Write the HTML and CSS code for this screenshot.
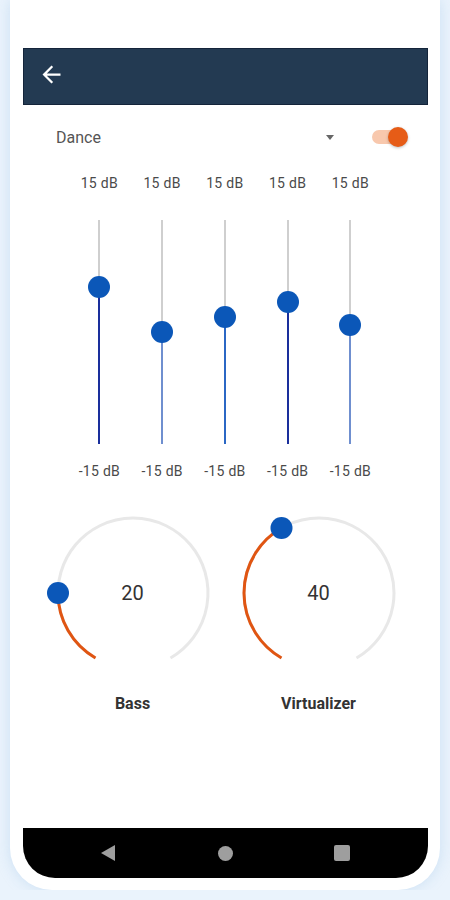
FILE: index.html
```html
<!DOCTYPE html>
<html>
<head>
  <title>Equalizer</title>
  <meta charset="utf-8">
  <meta name="viewport" content="width=device-width, initial-scale=1.0">
  <link rel="stylesheet" href="styles.css">
</head>
<body>
  <div class="phone">
    <div class="screen">
      <div class="appbar">
        <svg class="back" width="27" height="27" viewBox="0 0 24 24"><path d="M20 11H7.83l5.59-5.59L12 4l-8 8 8 8 1.41-1.41L7.83 13H20v-2z" fill="#fff"/></svg>
      </div>
      <div class="content">
        <div class="preset-row">
          <span class="preset">Dance</span>
          <span class="caret"></span>
          <span class="switch"><span class="switch-thumb"></span></span>
        </div>

        <div class="bands">
          <div class="band">
            <span class="db">15 dB</span>
            <div class="track"><div class="rest"></div><div class="fill dark" style="height:157px"><span class="thumb"></span></div></div>
            <span class="db">-15 dB</span>
          </div>
          <div class="band">
            <span class="db">15 dB</span>
            <div class="track"><div class="rest"></div><div class="fill light" style="height:112px"><span class="thumb"></span></div></div>
            <span class="db">-15 dB</span>
          </div>
          <div class="band">
            <span class="db">15 dB</span>
            <div class="track"><div class="rest"></div><div class="fill mid" style="height:127px"><span class="thumb"></span></div></div>
            <span class="db">-15 dB</span>
          </div>
          <div class="band">
            <span class="db">15 dB</span>
            <div class="track"><div class="rest"></div><div class="fill dark" style="height:142px"><span class="thumb"></span></div></div>
            <span class="db">-15 dB</span>
          </div>
          <div class="band">
            <span class="db">15 dB</span>
            <div class="track"><div class="rest"></div><div class="fill light" style="height:119px"><span class="thumb"></span></div></div>
            <span class="db">-15 dB</span>
          </div>
        </div>

        <div class="knobs">
          <div class="knob">
            <div class="dial">
              <svg width="184" height="184" viewBox="-12 -12 184 184">
                <path d="M42.5 144.95 A75 75 0 1 1 117.5 144.95" class="arc-bg"/>
                <path d="M42.5 144.95 A75 75 0 0 1 5 80" class="arc-on"/>
                <circle cx="5" cy="80" r="11" fill="#0b57b8"/>
              </svg>
              <span class="value">20</span>
            </div>
            <span class="knob-label">Bass</span>
          </div>
          <div class="knob">
            <div class="dial">
              <svg width="184" height="184" viewBox="-12 -12 184 184">
                <path d="M42.5 144.95 A75 75 0 1 1 117.5 144.95" class="arc-bg"/>
                <path d="M42.5 144.95 A75 75 0 0 1 42.5 15.05" class="arc-on"/>
                <circle cx="42.5" cy="15.05" r="11" fill="#0b57b8"/>
              </svg>
              <span class="value">40</span>
            </div>
            <span class="knob-label">Virtualizer</span>
          </div>
        </div>
      </div>
      <div class="navbar">
        <svg width="16" height="18" viewBox="0 0 16 18"><path d="M15 1v16L1 9z" fill="#9e9e9e"/></svg>
        <span class="nav-home"></span>
        <span class="nav-recent"></span>
      </div>
    </div>
  </div>
</body>
</html>
```

FILE: styles.css
```css
body { margin: 0; background: #eaf3fc; font-family: Roboto, "Liberation Sans", sans-serif; }

.phone {
  margin-left: 10px;
  width: 430px;
  height: 890px;
  box-sizing: border-box;
  padding: 48px 12px 12px 13px;
  background: #fff;
  border-radius: 0 0 42px 42px;
  box-shadow: 0 0 14px rgba(190, 215, 240, 0.7);
}
.screen { width: 405px; height: 830px; display: flex; flex-direction: column; }

.appbar {
  height: 57px;
  background: #233a52;
  border: 1px solid #14243a;
  box-sizing: border-box;
  display: flex;
  align-items: center;
  padding-left: 14px;
}
.back { margin-top: -4px; }

.content { flex: 1; background: #fff; }

.preset-row { display: flex; align-items: center; height: 24px; margin-top: 20px; padding-left: 33px; }
.preset { font-size: 16px; color: #555; flex: 1; }
.caret { width: 0; height: 0; border-left: 4px solid transparent; border-right: 4px solid transparent; border-top: 5px solid #666; margin-right: 38px; }
.switch { width: 28px; height: 14px; border-radius: 7px; background: #f8c8ad; position: relative; margin-right: 28px; }
.switch-thumb {
  position: absolute; right: -8px; top: -3px;
  width: 20px; height: 20px; border-radius: 50%;
  background: #e65c17;
  box-shadow: 0 1px 3px rgba(0, 0, 0, 0.25);
}

.bands { display: grid; grid-template-columns: repeat(5, 62.75px); padding-left: 45px; margin-top: 26px; }
.band { display: flex; flex-direction: column; align-items: center; }
.db { font-size: 14px; line-height: 16px; color: #4a4a4a; letter-spacing: 0.3px; white-space: nowrap; }
.track { width: 2px; height: 224px; display: flex; flex-direction: column; margin: 29px 0 19px; }
.rest { flex: 1; background: #cfcfcf; }
.fill { position: relative; }
.fill.dark { background: #1a2f9c; }
.fill.mid { background: #2b67c4; }
.fill.light { background: #6f8fcf; }
.thumb {
  position: absolute; left: -10px; top: -11px;
  width: 22px; height: 22px; border-radius: 50%;
  background: #0b57b8;
}

.knobs { display: flex; justify-content: center; gap: 2px; margin-top: 22px; }
.knob { display: flex; flex-direction: column; align-items: center; width: 184px; }
.dial { position: relative; width: 184px; height: 184px; }
.dial svg { display: block; }
.arc-bg { fill: none; stroke: #e8e8e8; stroke-width: 3; }
.arc-on { fill: none; stroke: #e05512; stroke-width: 3; }
.value {
  position: absolute; left: 0; right: 0; top: 80px;
  text-align: center; font-size: 20px; line-height: 24px; color: #333;
}
.knob-label { margin-top: 9px; font-size: 16px; line-height: 20px; font-weight: bold; color: #333; }

.navbar {
  height: 50px;
  background: #000;
  border-radius: 0 0 32px 32px;
  display: flex;
  align-items: center;
  justify-content: space-between;
  padding: 0 78px 0 77px;
}
.nav-home { width: 15px; height: 15px; border-radius: 50%; background: #9e9e9e; }
.nav-recent { width: 16px; height: 16px; border-radius: 2px; background: #9e9e9e; }
```
